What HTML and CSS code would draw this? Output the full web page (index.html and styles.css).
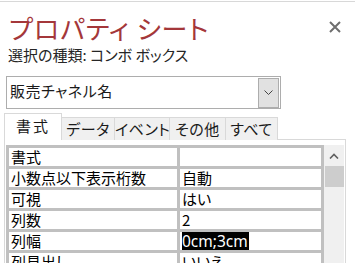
FILE: index.html
```html
<!DOCTYPE html>
<html lang="ja">
<head>
<meta charset="utf-8">
<link rel="stylesheet" href="styles.css">
</head>
<body>
<div class="sheet">
  <div class="topline"></div>
  <header class="head">
    <h1 class="title">プロパティ シート</h1>
    <span class="close"><svg width="12" height="12" viewBox="0 0 12 12"><path d="M1 1L11 11M11 1L1 11" stroke="#6e6e6e" stroke-width="2" fill="none"/></svg></span>
  </header>
  <div class="kind">選択の種類: コンボ ボックス</div>
  <div class="combo">
    <span class="combo-text">販売チャネル名</span>
    <span class="combo-btn"><svg width="9" height="5" viewBox="0 0 9 5"><path d="M0.5 0.5L4.5 4.5L8.5 0.5" stroke="#444" stroke-width="1" fill="none"/></svg></span>
  </div>
  <div class="tabs">
    <span class="tab active">書式</span>
    <span class="tab t2">データ</span>
    <span class="tab t3">イベント</span>
    <span class="tab t4">その他</span>
    <span class="tab t5">すべて</span>
  </div>
  <div class="panel">
    <div class="grid">
      <div class="cell">書式</div><div class="cell"></div>
      <div class="cell">小数点以下表示桁数</div><div class="cell val">自動</div>
      <div class="cell">可視</div><div class="cell val">はい</div>
      <div class="cell">列数</div><div class="cell val">2</div>
      <div class="cell">列幅</div><div class="cell val"><span class="sel">0cm;3cm</span></div>
      <div class="cell">列見出し</div><div class="cell val">いいえ</div>
    </div>
    <div class="scrollbar">
      <span class="arrow"><svg width="10" height="6" viewBox="0 0 10 6"><path d="M1 5.5L5 1.5L9 5.5" stroke="#606060" stroke-width="1.6" fill="none"/></svg></span>
      <span class="thumb"></span>
    </div>
  </div>
</div>
</body>
</html>
```
FILE: styles.css
```css
html, body {
  margin: 0;
  padding: 0;
  background: #ffffff;
}
body {
  width: 355px;
  height: 263px;
  overflow: hidden;
  font-family: "Noto Sans CJK JP", "Noto Sans", sans-serif;
  font-feature-settings: "palt";
  color: #1a1a1a;
}
.sheet {
  display: flex;
  flex-direction: column;
}
.topline {
  margin-top: 1px;
  height: 1px;
  background: #d8d8d8;
}
.head {
  display: flex;
  justify-content: space-between;
  align-items: center;
  height: 44px;
  padding: 0 14px 0 9px;
}
.title {
  margin: 0;
  font-weight: normal;
  font-size: 26px;
  line-height: 30px;
  color: #a4373a;
  letter-spacing: 1px;
  margin-top: 8px;
}
.close {
  display: flex;
  margin-top: 6px;
}
.kind {
  font-size: 15px;
  line-height: 20px;
  padding-left: 8px;
  margin-top: -1px;
  color: #262626;
}
.combo {
  margin: 11px 0 0 6px;
  width: 273px;
  height: 31px;
  border: 1px solid #adadad;
  display: flex;
  align-items: center;
  justify-content: space-between;
}
.combo-text {
  font-size: 15px;
  padding-left: 3px;
  margin-top: -5px;
  letter-spacing: 0.5px;
}
.combo-btn {
  width: 19px;
  height: 28px;
  margin-right: 1px;
  background: #e1e1e1;
  border: 1px solid #adadad;
  display: flex;
  align-items: center;
  justify-content: center;
}
.tabs {
  display: flex;
  align-items: flex-end;
  margin: 4px 0 0 4px;
  height: 27px;
  position: relative;
  z-index: 1;
}
.tab {
  box-sizing: border-box;
  height: 23px;
  background: #f0f0f0;
  border: 1px solid #d9d9d9;
  border-left: none;
  border-bottom: none;
  font-size: 15px;
  line-height: 22px;
  letter-spacing: 0.5px;
  white-space: nowrap;
  text-align: center;
  color: #1a1a1a;
}
.tab.active {
  width: 58px;
  height: 27px;
  background: #ffffff;
  border-left: 1px solid #d9d9d9;
  line-height: 24px;
  letter-spacing: 2px;
}
.t2 { width: 53px; }
.t3 { width: 55px; }
.t4 { width: 56px; }
.t5 { width: 52px; }
.panel {
  margin: -1px 0 0 4px;
  width: 339px;
  border: 1px solid #d9d9d9;
  padding: 5px 0 0 1px;
  display: flex;
  align-items: flex-start;
  height: 120px;
}
.grid {
  display: grid;
  grid-template-columns: 168px 141px;
  grid-auto-rows: 18px;
  gap: 3px;
  padding: 3px;
  background: #c0c0c0;
}
.cell {
  background: #ffffff;
  font-size: 15px;
  line-height: 18px;
  padding-left: 2px;
  white-space: nowrap;
  color: #000;
}
.val {
  padding-left: 2px;
}
.sel {
  display: inline-block;
  background: #000;
  color: #fff;
  font-family: "Noto Sans", "Noto Sans CJK JP", sans-serif;
  font-size: 15.5px;
  line-height: 18px;
  padding-right: 1px;
}
.scrollbar {
  width: 20px;
  height: 120px;
  background: #f0f0f0;
  display: flex;
  flex-direction: column;
  align-items: center;
}
.arrow {
  display: flex;
  height: 21px;
  align-items: center;
}
.thumb {
  width: 19px;
  height: 21px;
  background: #cdcdcd;
}
```
